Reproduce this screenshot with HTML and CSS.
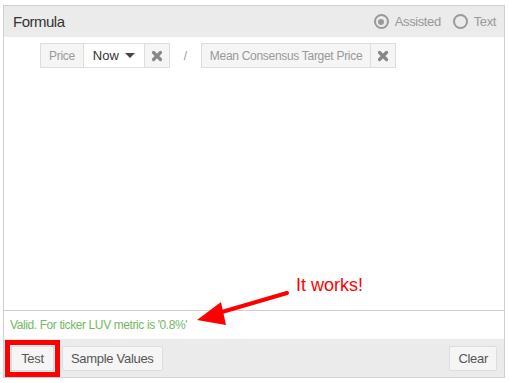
FILE: index.html
```html
<!DOCTYPE html>
<html>
<head>
<meta charset="utf-8">
<link rel="stylesheet" href="styles.css">
</head>
<body>
<div class="panel">
  <div class="header">
    <span class="title">Formula</span>
    <div class="modes">
      <label class="radio"><span class="dot checked"></span>Assisted</label>
      <label class="radio"><span class="dot"></span>Text</label>
    </div>
  </div>
  <div class="editor">
    <div class="tokens">
      <div class="group">
        <span class="cell label">Price</span>
        <span class="cell select">Now <span class="caret"></span></span>
        <span class="cell remove"><svg width="12" height="12" viewBox="0 0 12 12"><path d="M2.5 2.5 L9.5 9.5 M9.5 2.5 L2.5 9.5" stroke="#888" stroke-width="3.2" stroke-linecap="round"/></svg></span>
      </div>
      <span class="op">/</span>
      <div class="group">
        <span class="cell label">Mean Consensus Target Price</span>
        <span class="cell remove"><svg width="12" height="12" viewBox="0 0 12 12"><path d="M2.5 2.5 L9.5 9.5 M9.5 2.5 L2.5 9.5" stroke="#888" stroke-width="3.2" stroke-linecap="round"/></svg></span>
      </div>
    </div>
  </div>
  <div class="status">Valid. For ticker LUV metric is '0.8%'</div>
  <div class="footer">
    <div class="left">
      <button class="btn highlight">Test</button>
      <button class="btn">Sample Values</button>
    </div>
    <button class="btn">Clear</button>
  </div>
  <div class="note">It works!</div>
  <svg class="arrow" width="509" height="383" viewBox="0 0 509 383">
    <line x1="287" y1="293" x2="215" y2="314" stroke="#f00" stroke-width="4" stroke-linecap="round"/>
    <polygon points="197,320 221,302 226,325" fill="#f00"/>
  </svg>
</div>
</body>
</html>
```
FILE: styles.css
```css
* { box-sizing: border-box; }
html, body { margin: 0; padding: 0; background: #fff; }
body {
  font-family: "Liberation Sans", Arial, sans-serif;
  color: #333;
  width: 509px;
  height: 383px;
  overflow: hidden;
}
.panel {
  margin: 5px 0 0 3px;
  width: 502px;
  height: 373px;
  border: 1px solid #cfcfcf;
  display: flex;
  flex-direction: column;
}
.header {
  height: 31px;
  background: #ebebeb;
  display: flex;
  align-items: center;
  justify-content: space-between;
  padding: 0 8px 0 9px;
}
.title { font-size: 15px; color: #333; letter-spacing: -0.5px; }
.modes { display: flex; gap: 12px; align-items: center; }
.radio { display: flex; align-items: center; font-size: 13px; color: #999; gap: 6px; letter-spacing: -0.4px; }
.dot {
  width: 15px; height: 15px;
  border: 2px solid #999;
  border-radius: 50%;
  display: flex; align-items: center; justify-content: center;
}
.dot.checked::after {
  content: "";
  width: 6px; height: 6px;
  border-radius: 50%;
  background: #999;
}
.editor {
  flex: 1;
  background: #fff;
  border-bottom: 1px solid #d0d0d0;
  padding: 6px 0 0 36px;
}
.tokens { display: flex; align-items: center; }
.group { display: flex; border: 1px solid #ddd; height: 25px; }
.cell {
  display: flex; align-items: center;
  font-size: 12px;
  letter-spacing: -0.3px;
  padding: 0 8px;
  border-left: 1px solid #ddd;
}
.cell:first-child { border-left: none; }
.label { background: #f5f5f5; color: #999; }
.select { background: #fff; color: #333; font-size: 13px; letter-spacing: 0; width: 61px; padding: 0 9px; justify-content: space-between; }
.caret {
  width: 0; height: 0;
  border-left: 5px solid transparent;
  border-right: 5px solid transparent;
  border-top: 5px solid #444;
}
.remove { background: #f5f5f5; width: 25px; padding: 0; justify-content: center; }
.op { color: #999; font-size: 12px; width: 31px; text-align: center; }
.status {
  height: 28px;
  font-size: 12px;
  letter-spacing: -0.4px;
  color: #72b961;
  padding: 0 0 0 6px;
  display: flex;
  align-items: center;
}
.footer {
  height: 38px;
  background: #ebebeb;
  display: flex;
  align-items: center;
  justify-content: space-between;
  padding: 0 7px 0 7px;
}
.left { display: flex; gap: 8px; }
.btn {
  font-family: inherit;
  font-size: 13px;
  letter-spacing: -0.3px;
  color: #555;
  background: #f5f5f5;
  border: 1px solid #ddd;
  height: 25px;
  padding: 0 8px;
  border-radius: 2px;
}
.highlight {
  outline: 5px solid #f00;
  outline-offset: 1px;
  border-radius: 0;
  width: 43px;
}
.note {
  position: absolute;
  left: 296px;
  top: 275px;
  font-size: 18px;
  color: #f00;
}
.arrow { position: absolute; left: 0; top: 0; pointer-events: none; }
```
